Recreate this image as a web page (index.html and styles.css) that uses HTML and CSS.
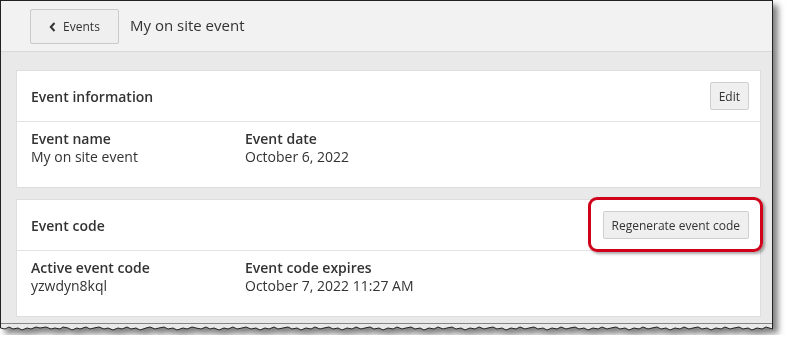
FILE: index.html
```html
<!DOCTYPE html>
<html lang="en">
  <head>
    <meta charset="UTF-8" />
    <meta name="viewport" content="width=device-width, initial-scale=1.0" />
    <title>My on site event</title>
    <link rel="stylesheet" href="styles.css">
  </head>
  <body>
    <div class="shot">
      <div class="frame">
        <div class="topbar">
          <button class="back" type="button">
            <svg width="7" height="10" viewBox="0 0 7 10"><path d="M5.5 1 L1.8 5 L5.5 9" fill="none" stroke="#333" stroke-width="2"/></svg>
            Events
          </button>
          <span class="page-title">My on site event</span>
        </div>

        <div class="content">
          <div class="card">
            <div class="card-head">
              <span>Event information</span>
              <button class="btn" type="button">Edit</button>
            </div>
            <div class="card-body">
              <div class="field">
                <div class="label">Event name</div>
                <div class="value">My on site event</div>
              </div>
              <div class="field">
                <div class="label">Event date</div>
                <div class="value">October 6, 2022</div>
              </div>
            </div>
          </div>

          <div class="card">
            <div class="card-head">
              <span>Event code</span>
              <div class="marked">
                <button class="btn" type="button">Regenerate event code</button>
                <div class="highlight"></div>
              </div>
            </div>
            <div class="card-body">
              <div class="field">
                <div class="label">Active event code</div>
                <div class="value">yzwdyn8kql</div>
              </div>
              <div class="field">
                <div class="label">Event code expires</div>
                <div class="value">October 7, 2022 11:27 AM</div>
              </div>
            </div>
          </div>
        </div>
      </div>
      <svg class="torn" width="773" height="12" viewBox="0 0 773 12">
        <path d="M0.5 0 L0.5 5 L5 6 L9 4 L13 6 L18 5 L22 7 L27 5 L31 6 L36 4 L40 5 L46 4 L51 6 L55 5 L60 6 L63 4 L68 5 L72 7 L77 5 L80 6 L86 4 L90 6 L94 5 L99 4 L104 6 L108 5 L113 7 L118 5 L122 6 L127 4 L131 6 L136 5 L140 7 L146 5 L150 4 L155 6 L159 5 L164 4 L168 6 L173 5 L177 7 L183 5 L187 6 L192 4 L196 5 L201 6 L206 4 L210 6 L214 5 L219 7 L224 5 L228 6 L233 4 L237 6 L242 5 L246 4 L251 6 L256 5 L260 7 L265 5 L269 6 L274 4 L278 6 L283 5 L288 4 L292 6 L297 5 L301 7 L306 5 L311 6 L315 4 L320 6 L324 5 L329 4 L333 6 L338 5 L342 7 L347 5 L352 6 L356 4 L361 6 L365 5 L370 4 L374 6 L379 5 L383 7 L388 5 L393 6 L397 4 L402 6 L406 5 L411 4 L415 6 L420 5 L424 7 L429 5 L434 6 L438 4 L443 6 L447 5 L452 4 L456 6 L461 5 L465 7 L470 5 L475 6 L479 4 L484 6 L488 5 L493 4 L497 6 L502 5 L506 7 L511 5 L516 6 L520 4 L525 6 L529 5 L534 4 L538 6 L543 5 L547 7 L552 5 L557 6 L561 4 L566 6 L570 5 L575 4 L579 6 L584 5 L588 7 L593 5 L598 6 L602 4 L607 6 L611 5 L616 4 L620 6 L625 5 L629 7 L634 5 L639 6 L643 4 L648 6 L652 5 L657 4 L661 6 L666 5 L670 7 L675 5 L680 6 L684 4 L689 6 L693 5 L698 4 L702 6 L707 5 L711 7 L716 5 L721 6 L725 4 L730 6 L734 5 L739 4 L743 6 L748 5 L752 7 L757 5 L762 6 L766 4 L772.5 6 L772.5 0 Z" fill="#e9e9e9" stroke="#222" stroke-width="1"/>
      </svg>
    </div>
  </body>
</html>
```

FILE: styles.css
```css
body {
  margin: 0;
  background: #fff;
  font-family: "Open Sans", "Noto Sans", sans-serif;
  color: #333;
}
.shot {
  width: 773px;
  filter: drop-shadow(5px 5px 3px rgba(0, 0, 0, 0.5));
}
.frame {
  border: 1px solid #222;
  border-bottom: none;
  background: #e9e9e9;
  height: 323px;
}
.torn {
  display: block;
  margin-top: -1px;
}
.topbar {
  height: 50px;
  background: #f2f2f2;
  border-bottom: 1px solid #d9d9d9;
  display: flex;
  align-items: center;
  padding-left: 29px;
}
.back {
  width: 89px;
  height: 35px;
  background: #efefef;
  border: 1px solid #cacaca;
  border-radius: 2px;
  font-family: inherit;
  font-size: 12px;
  color: #333;
  display: flex;
  align-items: center;
  justify-content: center;
  gap: 7px;
  padding: 0;
  margin-top: 1px;
}
.page-title {
  font-size: 15px;
  margin-left: 11px;
  margin-bottom: 2px;
}
.content {
  padding: 18px 11px 0 15px;
  display: flex;
  flex-direction: column;
  gap: 11px;
}
.card {
  background: #fff;
  border: 1px solid #dedede;
}
.card-head {
  height: 50px;
  border-bottom: 1px solid #e3e3e3;
  display: flex;
  align-items: center;
  justify-content: space-between;
  padding: 0 11px 0 14px;
  font-size: 14px;
  font-weight: 600;
}
.btn {
  background: #efefef;
  border: 1px solid #cfcfcf;
  border-radius: 2px;
  font-family: inherit;
  font-size: 12px;
  font-weight: 400;
  color: #333;
  height: 28px;
  padding: 0 8px;
}
.marked {
  position: relative;
}
.highlight {
  position: absolute;
  left: -15px;
  right: -14px;
  top: -14px;
  bottom: -13px;
  border: 3px solid #d0021b;
  border-radius: 9px;
  box-shadow: 2px 2px 3px rgba(0, 0, 0, 0.35);
}
.card-body {
  display: flex;
  padding: 8px 14px 21px;
  font-size: 14px;
  line-height: 18px;
}
.field {
  width: 214px;
}
.label {
  font-weight: 600;
}
```
